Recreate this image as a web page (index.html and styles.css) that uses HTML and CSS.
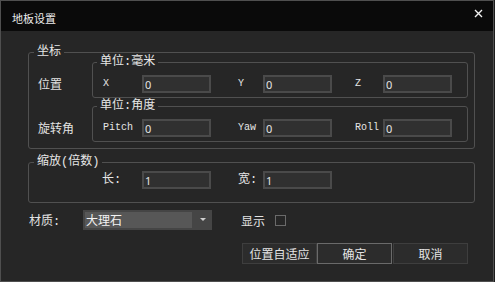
FILE: index.html
```html
<!DOCTYPE html>
<html lang="zh-CN">
<head>
<meta charset="utf-8">
<title>地板设置</title>
<link rel="stylesheet" href="styles.css">
</head>
<body>
<div class="window">
  <div class="titlebar">
    <span class="title">地板设置</span>
    <span class="close">
      <svg width="9" height="9" viewBox="0 0 9 9"><path d="M1 1L8 8M8 1L1 8" stroke="#f2f2f2" stroke-width="1.4" fill="none"/></svg>
    </span>
  </div>
  <div class="content">
    <div class="group g-coord">
      <span class="legend">坐标</span>
      <div class="row">
        <span class="row-label">位置</span>
        <div class="group inner">
          <span class="legend legend-inner">单位:毫米</span>
          <div class="fields">
            <span class="f-label">X</span><input class="field" type="text" value="0">
            <span class="f-label lab-2">Y</span><input class="field" type="text" value="0">
            <span class="f-label lab-3">Z</span><input class="field" type="text" value="0">
          </div>
        </div>
      </div>
      <div class="row row-2">
        <span class="row-label">旋转角</span>
        <div class="group inner">
          <span class="legend legend-inner">单位:角度</span>
          <div class="fields">
            <span class="f-label">Pitch</span><input class="field" type="text" value="0">
            <span class="f-label lab-2">Yaw</span><input class="field" type="text" value="0">
            <span class="f-label lab-3">Roll</span><input class="field" type="text" value="0">
          </div>
        </div>
      </div>
    </div>

    <div class="group g-scale">
      <span class="legend">缩放(倍数)</span>
      <div class="fields">
        <span class="f-label cjk">长:</span><input class="field" type="text" value="1">
        <span class="f-label cjk lab-2">宽:</span><input class="field" type="text" value="1">
      </div>
    </div>

    <div class="material-row">
      <span class="mat-label">材质:</span>
      <div class="combo">
        <span class="combo-text">大理石</span>
        <span class="combo-arrow"><svg width="6" height="4" viewBox="0 0 6 4"><path d="M0 0H6L3 3Z" fill="#cfcfcf"/></svg></span>
      </div>
      <span class="show-label">显示</span>
      <span class="checkbox"></span>
    </div>

    <div class="buttons">
      <button class="btn">位置自适应</button>
      <button class="btn btn-default">确定</button>
      <button class="btn btn-cancel">取消</button>
    </div>
  </div>
</div>
</body>
</html>
```

FILE: styles.css
```css
html, body {
  margin: 0;
  padding: 0;
  background: #1c1c1c;
}
body {
  font-family: "Noto Sans CJK SC", "Noto Sans", sans-serif;
  font-size: 12px;
  color: #e2e2e2;
}
.window {
  width: 494px;
  height: 282px;
  box-sizing: border-box;
  border: 1px solid #4f4f4f;
  background: #262626;
  display: flex;
  flex-direction: column;
}
.titlebar {
  height: 30px;
  flex: none;
  background: #0a0a0a;
  display: flex;
  align-items: center;
  padding-left: 11px;
  padding-right: 11px;
}
.title {
  font-size: 11px;
  line-height: 16px;
  padding-top: 4px;
  color: #ececec;
  flex: 1;
}
.close {
  display: flex;
  width: 9px;
  height: 9px;
  margin-top: -6px;
  margin-right: -1px;
}
.content {
  padding: 21px 0 0 27px;
}
.group {
  position: relative;
  border: 1px solid #505050;
  border-radius: 3px;
  box-sizing: border-box;
}
.legend {
  position: absolute;
  top: -9px;
  left: 5px;
  padding: 0 3px;
  line-height: 16px;
  background: #262626;
  font-family: "Liberation Mono", "Noto Sans CJK SC", monospace;
  font-size: 12px;
  color: #e6e6e6;
  white-space: nowrap;
}
.legend-inner {
  left: 4px;
}
.g-coord {
  width: 447px;
  padding: 9px 6px 6px 0;
}
.row {
  display: flex;
  align-items: center;
}
.row-2 {
  margin-top: 8px;
}
.row-label {
  width: 63px;
  flex: none;
  box-sizing: border-box;
  padding-left: 9px;
  padding-top: 7px;
  line-height: 16px;
}
.inner {
  flex: 1;
  padding: 12px 0 4px 10px;
}
.fields {
  display: flex;
  align-items: center;
  height: 18px;
}
.f-label {
  width: 39px;
  flex: none;
  font-family: "Liberation Mono", monospace;
  font-size: 10px;
  line-height: 18px;
  color: #e6e6e6;
}
.f-label.cjk {
  font-family: "Liberation Mono", "Noto Sans CJK SC", monospace;
  font-size: 12px;
  margin-left: -1px;
  width: 40px;
}
.lab-2 {
  margin-left: 27px;
  width: 25px;
}
.f-label.cjk.lab-2 {
  margin-left: 27px;
  width: 25px;
}
.lab-3 {
  margin-left: 23px;
  width: 28px;
}
.field {
  -webkit-appearance: none;
  appearance: none;
  width: 69px;
  height: 18px;
  box-sizing: border-box;
  margin: 0;
  border: 2px solid #4a4a4a;
  border-radius: 0;
  background: #303030;
  padding: 0 0 0 1px;
  font-family: "Noto Sans", sans-serif;
  font-size: 11px;
  line-height: 14px;
  color: #e4e4e4;
  outline: none;
  flex: none;
}
.g-scale {
  width: 447px;
  margin-top: 13px;
  padding: 8px 0 13px 74px;
}
.material-row {
  display: flex;
  align-items: center;
  margin-top: 7px;
  height: 20px;
}
.mat-label {
  width: 55px;
  flex: none;
  padding-left: 1px;
  box-sizing: border-box;
  font-family: "Liberation Mono", "Noto Sans CJK SC", monospace;
  font-size: 12px;
}
.combo {
  width: 129px;
  height: 20px;
  box-sizing: border-box;
  padding: 2px 0 2px 2px;
  background: #454545;
  display: flex;
}
.combo-text {
  width: 107px;
  background: #575757;
  padding-left: 1px;
  box-sizing: border-box;
  line-height: 16px;
  color: #f2f2f2;
}
.combo-arrow {
  flex: 1;
  display: flex;
  align-items: center;
  justify-content: center;
  padding-left: 1px;
}
.show-label {
  margin-left: 29px;
}
.checkbox {
  width: 11px;
  height: 11px;
  box-sizing: border-box;
  border: 1px solid #6a6a6a;
  margin-left: 10px;
}
.buttons {
  display: flex;
  justify-content: flex-end;
  width: 447px;
  padding-right: 7px;
  box-sizing: border-box;
  margin-top: 13px;
}
.btn {
  width: 75px;
  height: 21px;
  box-sizing: border-box;
  margin: 0;
  padding: 0;
  border: 1px solid #3e3e3e;
  background: #2c2c2c;
  color: #e4e4e4;
  font-family: "Noto Sans CJK SC", sans-serif;
  font-size: 12px;
  line-height: 18px;
}
.btn-default {
  border-color: #6a6a6a;
}
.btn-cancel {
  margin-left: 1px;
}
```
